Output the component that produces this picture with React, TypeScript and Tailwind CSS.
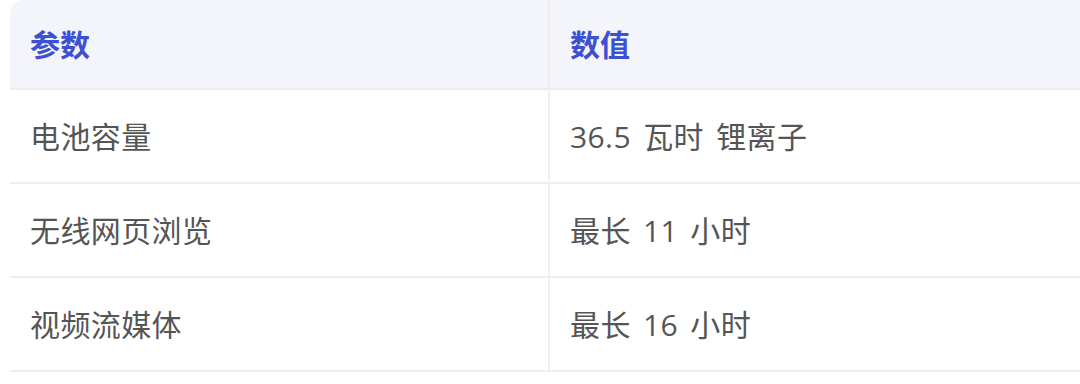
const rows = [
  { name: "电池容量", value: "36.5 瓦时 锂离子" },
  { name: "无线网页浏览", value: "最长 11 小时" },
  { name: "视频流媒体", value: "最长 16 小时" },
];

export default function App() {
  return (
    <div
      className="w-[1080px] h-[384px] overflow-hidden bg-white pl-[10px]"
      style={{ fontFamily: '"Open Sans", "Noto Sans CJK SC", sans-serif' }}
    >
      <div className="w-[1100px] rounded-tl-[14px] overflow-hidden">
        {/* Header */}
        <div className="grid grid-cols-[538px_1fr] bg-[#f4f5fa] border-b-2 border-[#ececef]">
          <div className="h-[88px] flex items-center px-[20px] text-[30px] font-bold text-[#3b50d3]">
            参数
          </div>
          <div className="h-[88px] flex items-center px-[20px] border-l-2 border-[#ececef] text-[30px] font-bold text-[#3b50d3]">
            数值
          </div>
        </div>
        {/* Rows */}
        {rows.map((r) => (
          <div key={r.name} className="grid grid-cols-[538px_1fr] border-b-2 border-[#efefef]">
            <div className="h-[92px] flex items-center px-[20px] text-[30px] tracking-[0.4px] text-[#555555]">
              {r.name}
            </div>
            <div className="h-[92px] flex items-center px-[20px] border-l-2 border-[#efefef] text-[30px] tracking-[0.4px] [word-spacing:4px] text-[#555555]">
              {r.value}
            </div>
          </div>
        ))}
      </div>
    </div>
  );
}
